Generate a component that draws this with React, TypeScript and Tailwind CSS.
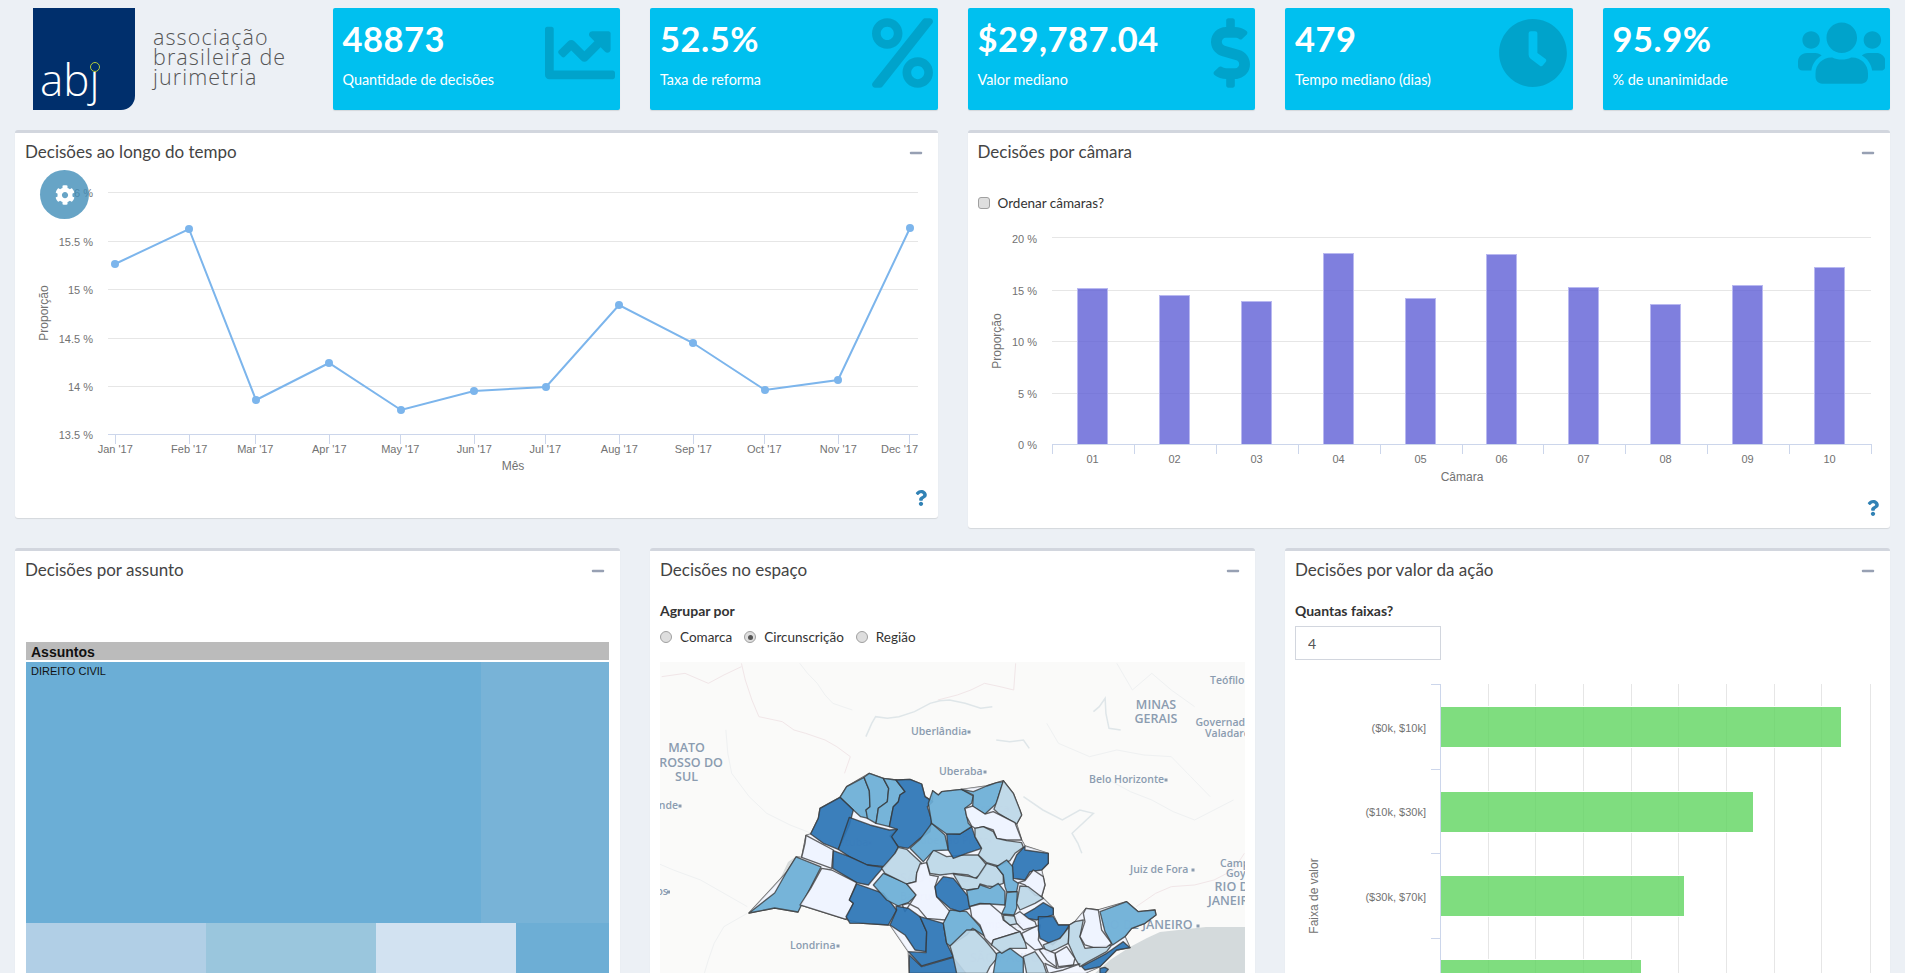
import type { ReactNode } from 'react';
import { FaChartLine, FaClock, FaCog, FaDollarSign, FaMinus, FaPercent, FaQuestion, FaUsers } from 'react-icons/fa';

const stats = [
  { value: '48873', label: 'Quantidade de decisões', Icon: FaChartLine, iconWidth: 'w-[70px]' },
  { value: '52.5%', label: 'Taxa de reforma', Icon: FaPercent, iconWidth: 'w-[61px]' },
  { value: '$29,787.04', label: 'Valor mediano', Icon: FaDollarSign, iconWidth: 'w-[39px]' },
  { value: '479', label: 'Tempo mediano (dias)', Icon: FaClock, iconWidth: 'w-[70px]' },
  { value: '95.9%', label: '% de unanimidade', Icon: FaUsers, iconWidth: 'w-[87.5px]' },
];

const lineData = [
  ["Jan '17", 115.3, 115, 264],
  ["Feb '17", 189.3, 189, 229],
  ["Mar '17", 255.3, 256, 400],
  ["Apr '17", 329.3, 329, 363],
  ["May '17", 400.3, 401, 410],
  ["Jun '17", 474.3, 474, 391],
  ["Jul '17", 545.3, 546, 387],
  ["Aug '17", 619.3, 619, 305],
  ["Sep '17", 693.3, 693, 343],
  ["Oct '17", 764.3, 765, 390],
  ["Nov '17", 838.3, 838, 380],
  ["Dec '17", 909.3, 910, 228],
] as const;

const chamberBars = [
  ['01', 1077.5, 288.5],
  ['02', 1159.5, 295.5],
  ['03', 1241.5, 301.5],
  ['04', 1323.5, 253.5],
  ['05', 1405.5, 298.5],
  ['06', 1486.5, 254.5],
  ['07', 1568.5, 287.5],
  ['08', 1650.5, 304.5],
  ['09', 1732.5, 285.5],
  ['10', 1814.5, 267.5],
] as const;

const AXIS_TEXT = '#727272';
const DARK = '#2b74b5';
const MID = '#6baed6';
const LIGHT = '#bdd7e7';
const PALE = '#eff3ff';

// state outline, goes under the regions so small gaps stay pale
const outline =
  '-123,459 -12,339 18,291 35,292 48,226 62,222 85,175 90,145 150,112 170,80 238,40 280,55 318,60 360,58 395,72 405,110 428,125 428,92 445,105 455,95 515,88 590,78 640,62 670,100 695,165 680,192 695,240 705,258 775,280 775,310 755,330 765,375 755,410 790,445 790,465 805,495 838,495 855,485 888,445 925,450 1010,425 1045,455 1095,450 1098,465 1065,490 1025,505 1005,530 1020,563 980,570 930,620 885,640 358,640 355,575 300,495 220,490 168,478 30,435 24,456 -46,444';

// traced off the reference, coordinates are 3x page px from (790,760)
const regions: [string, string][] = [
  [MID, '150,112 170,80 222,52 238,92 240,140 228,150 235,175 212,170 190,150'],
  [MID, '222,52 238,40 280,55 296,85 292,125 265,145 258,190 232,175 228,150 240,140 238,92'],
  [MID, '280,55 318,60 345,95 330,105 325,125 310,140 298,200 258,190 265,145 292,125 296,85'],
  [DARK, '318,60 360,58 395,72 405,110 428,125 412,140 425,180 420,215 390,235 355,265 325,260 300,228 322,208 298,200 310,140 325,125 330,105 345,95'],
  [DARK, '62,222 85,175 90,145 150,112 190,150 178,195 145,268 100,250'],
  [DARK, '178,172 240,195 298,210 322,208 305,230 325,262 315,280 285,320 232,315 178,290 145,268'],
  [PALE, '48,226 130,270 125,325 35,292 45,250'],
  [DARK, '130,272 178,290 232,315 280,322 260,345 235,375 200,368 128,325'],
  [MID, '-123,459 -46,444 24,456 47,411 93,321 18,291 -12,339 -46,399'],
  [PALE, '95,325 125,330 200,368 178,420 190,430 168,478 30,435 62,385'],
  [DARK, '200,372 280,400 320,450 295,495 220,490 180,490 168,470 190,430 178,420'],
  [MID, '250,375 280,340 350,370 380,405 355,428 325,438 290,420'],
  [LIGHT, '275,325 315,280 325,262 350,268 395,310 380,340 378,365 350,372 285,340'],
  [PALE, '390,312 410,308 420,345 445,350 435,380 440,410 480,455 465,480 410,475 385,445 355,430 337,435 345,455 378,405 350,372 378,365 380,340'],
  [DARK, '318,438 355,445 390,470 410,515 408,575 375,570 345,525 300,495 320,450'],
  [DARK, '390,470 460,490 470,550 490,590 395,618 355,575 408,578 410,515'],
  [DARK, '358,585 395,620 490,592 528,640 358,640'],
  [MID, '480,450 530,455 570,500 587,530 548,505 530,525 480,558 470,550 460,490'],
  [LIGHT, '530,510 555,510 585,540 610,570 625,590 600,620 590,640 500,640 488,585 480,558'],
  [MID, '610,640 620,580 660,565 700,595 700,640'],
  [DARK, '435,380 460,350 490,355 515,385 535,410 540,445 510,455 480,445 440,410'],
  [LIGHT, '410,305 430,270 470,290 520,285 565,285 590,315 570,345 555,355 535,345 490,340 450,345 420,340'],
  [LIGHT, '490,342 540,350 560,355 590,310 620,320 640,345 640,370 610,380 590,378 570,372 565,385 530,390 515,385'],
  [MID, '530,392 565,385 570,375 600,385 625,370 645,395 645,435 600,432 570,430 538,440'],
  [MID, '360,265 390,238 425,190 465,225 475,270 430,272 400,305'],
  [DARK, '470,220 510,222 545,200 555,230 575,265 530,280 490,295 475,270'],
  [MID, '415,130 428,92 445,105 455,95 515,88 550,108 545,130 525,145 535,190 545,200 510,222 470,222 425,190 420,160'],
  [MID, '515,88 550,95 590,78 620,68 640,65 625,110 620,130 585,162 548,140 550,105'],
  [LIGHT, '640,62 670,100 690,150 695,165 680,192 625,160 612,148 625,110'],
  [PALE, '525,145 548,138 585,162 610,155 675,188 695,240 650,240 620,235 610,210 580,200 555,205 545,198 530,170'],
  [LIGHT, '555,205 580,200 610,215 620,235 650,242 695,248 700,262 675,280 660,302 625,318 590,308 565,285 575,265 555,230'],
  [DARK, '705,258 705,270 775,280 775,310 755,330 720,335 705,360 670,355 665,320 680,285'],
  [MID, '620,320 650,300 668,320 670,360 685,370 680,395 650,395 645,380 640,345'],
  [PALE, '685,368 705,362 730,330 760,350 765,375 755,410 735,405 705,375'],
  [MID, '650,398 682,395 680,445 672,465 635,462 645,440'],
  [LIGHT, '690,378 715,380 760,415 735,430 690,450 680,430'],
  [DARK, '700,465 735,445 760,428 790,445 790,465 740,480 710,475'],
  [PALE, '540,440 570,432 600,432 635,462 640,480 680,510 690,515 610,540 605,555 585,535 570,495 545,470'],
  [LIGHT, '640,465 675,468 690,490 660,495 642,480'],
  [PALE, '672,465 690,455 715,475 735,485 740,500 715,505 700,510 680,490'],
  [LIGHT, '610,540 690,515 705,545 710,565 660,565 635,580 605,555'],
  [PALE, '695,520 725,505 750,495 745,540 760,565 735,570 705,545'],
  [DARK, '745,470 790,470 805,495 838,495 820,525 788,555 750,535 745,510'],
  [LIGHT, '760,555 810,535 838,500 835,550 795,570 770,580'],
  [LIGHT, '838,495 855,485 880,480 870,530 885,565 965,555 950,575 895,605 870,620 855,595 835,550'],
  [PALE, '880,460 888,445 925,450 935,510 965,550 950,562 910,562 885,555 870,530 885,485'],
  [MID, '930,455 1010,425 1045,455 1095,450 1098,465 1065,490 1025,505 1005,530 968,555 945,515'],
  [DARK, '875,620 950,580 1000,545 1020,563 980,570 930,620 885,630'],
  [DARK, '930,625 945,622 955,628 945,640 930,640'],
  [PALE, '795,580 830,560 855,595 850,615 805,620'],
  [PALE, '765,610 800,625 870,612 820,630 775,640'],
  [LIGHT, '700,590 735,575 760,610 770,640 710,640'],
  [PALE, '748,570 760,565 795,580 800,622 770,600'],
];

const mapLabels: [string, number, number, 'start' | 'middle' | 'end', number][] = [
  ['Teófilo', 1210, 681, 'start', 10.5],
  ['MINAS', 1156, 706, 'middle', 12.5],
  ['GERAIS', 1156, 720, 'middle', 12.5],
  ['Governador', 1195.5, 723, 'start', 10.5],
  ['Valadares', 1205, 734, 'start', 10.5],
  ['Uberlândia', 911, 732, 'start', 10.5],
  ['Uberaba', 939, 772, 'start', 10.5],
  ['Belo Horizonte', 1089, 780, 'start', 10.5],
  ['MATO', 686.6, 749, 'middle', 12.5],
  ['GROSSO DO', 686.6, 764, 'middle', 12.5],
  ['SUL', 686.6, 778, 'middle', 12.5],
  ['Campo Grande', 678, 806, 'end', 10.5],
  ['Dourados', 668, 892, 'end', 10.5],
  ['Londrina', 790, 946, 'start', 10.5],
  ['Juiz de Fora', 1130, 870, 'start', 10.5],
  ['Campos dos', 1220, 864, 'start', 10.5],
  ['Goytacazes', 1226, 874, 'start', 10.5],
  ['RIO DE', 1214.6, 888, 'start', 12.5],
  ['JANEIRO', 1208, 902, 'start', 12.5],
  ['RIO DE JANEIRO', 1098, 926, 'start', 12.5],
  ['Araçatuba', 816, 843, 'start', 10.5],
  ['Ribeirão Preto', 917, 841, 'start', 10.5],
  ['Franca', 975, 809, 'start', 10.5],
  ['SÃO PAULO', 900, 879, 'start', 12.5],
  ['Bauru', 900, 897, 'start', 10.5],
  ['Campinas', 972, 925, 'start', 10.5],
  ['SÃO PAULO', 970, 959, 'start', 12.5],
];

const mapDots = [
  [969, 732], [985, 772], [1166, 780], [680, 806], [838, 946], [1193, 870], [1198, 926],
  [870, 843], [990, 841], [1008, 809], [932, 897], [1023, 925], [668.5, 892],
];

function Box({ title, children }: { title: string; children: ReactNode }) {
  return (
    <div className="relative rounded-[3px] border-t-[3px] border-[#d2d6de] bg-white shadow-[0_1px_1px_rgba(0,0,0,0.1)]">
      <div className="flex h-[40px] items-center justify-between pl-[10px] pr-[15px]">
        <h3 className="pb-[3px] text-[17px] text-[#444]">{title}</h3>
        <FaMinus size={14} className="text-[#97a0b3]" />
      </div>
      {children}
    </div>
  );
}

function HelpMark() {
  return (
    <div className="flex h-[40px] items-center justify-end pr-[9px] text-[#3182b5]">
      <FaQuestion size={16} />
    </div>
  );
}

function Radio({ label, checked = false }: { label: string; checked?: boolean }) {
  return (
    <div className="flex items-center gap-[8px] text-[13.5px] text-[#333]">
      <div className="flex h-3 w-3 items-center justify-center rounded-full border border-[#a0a0a0] bg-[#dedede]">
        {checked && <div className="h-[5px] w-[5px] rounded-full bg-[#555]" />}
      </div>
      <span>{label}</span>
    </div>
  );
}

function LineChart() {
  const points = lineData.map((d) => `${d[2]},${d[3]}`).join(' ');
  const grid: [number, string][] = [
    [192.5, '16 %'],
    [241.5, '15.5 %'],
    [289.5, '15 %'],
    [338.5, '14.5 %'],
    [386.5, '14 %'],
    [434.5, '13.5 %'],
  ];
  return (
    <svg viewBox="15 173 922 305" className="block h-[305px] w-[922px] font-['Liberation_Sans',sans-serif] text-[11px]">
      {grid.map(([y, label], i) => (
        <g key={label}>
          <line x1="108" x2="918" y1={y} y2={y} stroke={i === 5 ? '#ccd6eb' : '#e6e6e6'} shapeRendering="crispEdges" />
          <text x="93" y={y + 2} textAnchor="end" dominantBaseline="middle" fill={AXIS_TEXT}>{label}</text>
        </g>
      ))}
      {lineData.map((d, i) => (
        <g key={d[0]}>
          <line x1={d[1]} x2={d[1]} y1="434" y2="444" stroke="#ccd6eb" shapeRendering="crispEdges" />
          <text x={i === 11 ? 918 : d[1]} y="450" textAnchor={i === 11 ? 'end' : 'middle'} dominantBaseline="middle" fill={AXIS_TEXT}>{d[0]}</text>
        </g>
      ))}
      <text x="513" y="467" textAnchor="middle" dominantBaseline="middle" fill={AXIS_TEXT} className="text-[12px]">Mês</text>
      <text x="45" y="313" textAnchor="middle" dominantBaseline="middle" fill={AXIS_TEXT} transform="rotate(-90 45 313)" className="text-[12px]">Proporção</text>
      <polyline points={points} fill="none" stroke="#7cb5ec" strokeWidth="2" />
      {lineData.map((d) => (
        <circle key={d[0]} cx={d[2]} cy={d[3]} r="4" fill="#7cb5ec" />
      ))}
    </svg>
  );
}

function ChamberChart() {
  const grid: [number, string, number][] = [
    [237.5, '20 %', 240.5],
    [290.5, '15 %', 292.5],
    [341.5, '10 %', 343.5],
    [393.5, '5 %', 395.5],
  ];
  const ticks = [1052, 1134, 1216, 1298, 1380, 1462, 1543, 1625, 1707, 1789, 1871];
  return (
    <svg viewBox="968 213 922 275" className="block h-[275px] w-[922px] font-['Liberation_Sans',sans-serif] text-[11px]">
      {grid.map(([y, label, ty]) => (
        <g key={label}>
          <line x1="1052" x2="1871" y1={y} y2={y} stroke="#e6e6e6" shapeRendering="crispEdges" />
          <text x="1037" y={ty} textAnchor="end" dominantBaseline="middle" fill={AXIS_TEXT}>{label}</text>
        </g>
      ))}
      <text x="1037" y="446" textAnchor="end" dominantBaseline="middle" fill={AXIS_TEXT}>0 %</text>
      {chamberBars.map(([name, x, y]) => (
        <rect key={name} x={x} y={y} width="30" height={444.5 - y} fill="#5f5fd6" fillOpacity="0.8" stroke="#b9b9f0" shapeRendering="crispEdges" />
      ))}
      <line x1="1052" x2="1871" y1="444.5" y2="444.5" stroke="#ccd6eb" shapeRendering="crispEdges" />
      {ticks.map((x) => (
        <line key={x} x1={x} x2={x} y1="444" y2="454" stroke="#ccd6eb" shapeRendering="crispEdges" />
      ))}
      {chamberBars.map(([name, x]) => (
        <text key={name} x={x + 15} y="460" textAnchor="middle" dominantBaseline="middle" fill={AXIS_TEXT}>{name}</text>
      ))}
      <text x="1462" y="478" textAnchor="middle" dominantBaseline="middle" fill={AXIS_TEXT} className="text-[12px]">Câmara</text>
      <text x="998" y="341" textAnchor="middle" dominantBaseline="middle" fill={AXIS_TEXT} transform="rotate(-90 998 341)" className="text-[12px]">Proporção</text>
    </svg>
  );
}

function SpMap() {
  return (
    <svg viewBox="660 662 585 330" className="block h-[330px] w-[585px] bg-[#fafaf9]">
      <g fill="none" stroke="#f1e6e8" strokeWidth="1" transform="translate(650 640) scale(0.389 0.3333)">
        <polyline vectorEffect="non-scaling-stroke" points="235,70 245,120 262,180 280,230 340,245 370,270 400,280 450,300 480,320 515,350 500,400" />
        <polyline vectorEffect="non-scaling-stroke" points="940,70 935,150 900,140 860,130 825,150 790,165 740,180" />
        <polyline vectorEffect="non-scaling-stroke" points="30,110 90,100 150,130 190,105 235,80" />
        <polyline vectorEffect="non-scaling-stroke" points="1250,800 1300,760 1340,740 1400,735 1450,720 1500,690 1528,640" />
      </g>
      <g fill="none" stroke="#eff1f2" strokeWidth="1" transform="translate(650 640) scale(0.389 0.3333)">
        <polyline vectorEffect="non-scaling-stroke" points="385,70 405,100 430,130 450,165 470,190 520,210" />
        <polyline vectorEffect="non-scaling-stroke" points="195,270 200,340 210,400 255,470 300,520 360,555 415,580" />
        <polyline vectorEffect="non-scaling-stroke" points="0,660 60,690 130,720 190,760 250,800" />
        <polyline vectorEffect="non-scaling-stroke" points="250,820 190,860 165,910 150,960 140,999" />
        <polyline vectorEffect="non-scaling-stroke" points="1200,70 1220,110 1240,150 1265,125 1290,100 1340,150 1400,200" />
        <polyline vectorEffect="non-scaling-stroke" points="1020,250 1050,310 1090,330 1130,350 1200,330 1270,345 1340,350 1390,410 1440,470" />
        <polyline vectorEffect="non-scaling-stroke" points="1180,420 1235,455 1290,480 1345,515 1400,540 1450,510 1500,480" />
      </g>
      <g fill="none" stroke="#dfe6e9" strokeWidth="1.5" transform="translate(650 640) scale(0.389 0.3333)">
        <polyline vectorEffect="non-scaling-stroke" points="555,290 570,250 580,230 610,235 640,230 680,215 720,190 745,182 770,180 810,190 850,205 880,200" />
        <polyline vectorEffect="non-scaling-stroke" points="1140,215 1155,200 1170,175 1172,220 1180,265 1210,270" />
        <polyline vectorEffect="non-scaling-stroke" points="890,300 925,305 960,300 975,325" />
        <polyline vectorEffect="non-scaling-stroke" points="960,470 1010,510 1060,540 1105,510 1140,520 1085,580 1100,610 1110,640" />
      </g>
      <polygon points="1245,927 1206,927 1160,932 1147,938 1130,947 1110,960 1093,975 1245,992" fill="#d4dadc" />
      <polygon points="795,857 785,875 772,895 760,905 775,890 788,862" fill="#d8dcdc" />
      <g fill="#8b9cb0" className="font-['Open_Sans',sans-serif] font-semibold">
        {mapLabels.map(([text, x, y, anchor, size], i) => (
          <text key={i} x={x} y={y} textAnchor={anchor} dominantBaseline="middle" fontSize={size}>{text}</text>
        ))}
        {mapDots.map(([x, y]) => (
          <rect key={`${x}-${y}`} x={x - 1.5} y={y - 1.5} width="3" height="3" />
        ))}
      </g>
      <g transform="translate(790 760) scale(0.3333)">
        <polygon points={outline} fill="#fff" stroke="#444" strokeOpacity="0.8" strokeWidth="4" strokeLinejoin="round" fillOpacity="0.45" />
        <polygon points={outline} fill={PALE} fillOpacity="0.7" />
        {regions.map(([color, pts], i) => (
          <polygon key={i} points={pts} fill={color} fillOpacity="0.92" stroke="#333" strokeOpacity="0.75" strokeWidth="4" strokeLinejoin="round" />
        ))}
      </g>
    </svg>
  );
}

function ValueChart() {
  const gridX = [1488.5, 1535.5, 1583.5, 1631.5, 1678.5, 1726.5, 1774.5, 1821.5, 1870.5];
  const bars = [
    [707, 1841, '($0k, $10k]', 729],
    [792, 1753, '($10k, $30k]', 813],
    [876, 1684, '($30k, $70k]', 898],
    [960, 1641, '($70k, $200k]', 982],
  ] as const;
  return (
    <svg viewBox="1285 684 605 330" className="mt-[24px] block h-[330px] w-[605px] font-['Liberation_Sans',sans-serif] text-[11px]">
      {gridX.map((x) => (
        <line key={x} x1={x} x2={x} y1="684" y2="1014" stroke="#e6e6e6" shapeRendering="crispEdges" />
      ))}
      {bars.map(([y, right, label, ty]) => (
        <g key={label}>
          <rect x="1440.5" y={y - 0.5} width={right - 1440.5} height="41" fill="#5fd55f" fillOpacity="0.8" stroke="#fff" shapeRendering="crispEdges" />
          <text x="1426" y={ty} textAnchor="end" dominantBaseline="middle" fill={AXIS_TEXT}>{label}</text>
        </g>
      ))}
      <line x1="1440.5" x2="1440.5" y1="684" y2="1014" stroke="#ccd6eb" shapeRendering="crispEdges" />
      {[684.5, 769.5, 853.5, 938.5].map((y) => (
        <line key={y} x1="1431" x2="1440" y1={y} y2={y} stroke="#ccd6eb" shapeRendering="crispEdges" />
      ))}
      <text x="1315" y="896" textAnchor="middle" dominantBaseline="middle" fill={AXIS_TEXT} transform="rotate(-90 1315 896)" className="text-[12px]">Faixa de valor</text>
    </svg>
  );
}

export default function App() {
  return (
    <div className="h-[973px] overflow-hidden bg-[#ecf0f5] font-['Lato',sans-serif] text-[#333]">
      <div className="grid grid-cols-6 gap-x-[30px] px-[15px] pt-2">
        <div className="flex pl-[18px]">
          <div className="relative h-[102px] w-[102px] shrink-0 rounded-br-[14px] bg-[#002f6c]">
            <span className="absolute left-[7px] top-[47px] font-['Open_Sans',sans-serif] text-[44px] font-light leading-[48px] text-white">abj</span>
            <span className="absolute left-[57px] top-[54px] h-[10px] w-[10px] rounded-full border border-[#b4cc3c] bg-[#002f6c]" />
          </div>
          <div className="whitespace-nowrap pl-[18px] pt-[19px] font-['Open_Sans',sans-serif] text-[21.5px] font-light leading-[20px] tracking-[1.1px] text-[#555]">
            associação<br />brasileira de<br />jurimetria
          </div>
        </div>
        {stats.map(({ value, label, Icon, iconWidth }) => (
          <div key={label} className="relative h-[102px] overflow-hidden rounded-[2px] bg-[#00c0ef] pl-[10px] pt-[10px] text-white shadow-[0_1px_1px_rgba(0,0,0,0.1)]">
            <div className="text-[34.5px] font-bold leading-[42px] tracking-[0.5px]">{value}</div>
            <div className="mt-[10px] text-[14.4px] leading-[20px]">{label}</div>
            <Icon className={`absolute right-[5px] top-[10px] h-[70px] text-black/15 ${iconWidth}`} />
          </div>
        ))}
      </div>

      <div className="mt-5 grid grid-cols-2 items-start gap-x-[30px] px-[15px]">
        <Box title="Decisões ao longo do tempo">
          <LineChart />
          <HelpMark />
          <button className="absolute left-[25px] top-[37px] flex h-[49px] w-[49px] items-center justify-center rounded-full bg-[#418db8]/80 text-white">
            <FaCog size={20} />
          </button>
        </Box>
        <Box title="Decisões por câmara">
          <div className="flex h-[40px] items-end pl-[10px]">
            <div className="flex h-[20px] items-center gap-[8px]">
              <div className="h-3 w-3 rounded-[3px] border border-[#a0a0a0] bg-[#dedede]" />
              <span className="text-[13.5px]">Ordenar câmaras?</span>
            </div>
          </div>
          <ChamberChart />
          <HelpMark />
        </Box>
      </div>

      <div className="mt-5 grid grid-cols-3 items-start gap-x-[30px] px-[15px]">
        <Box title="Decisões por assunto">
          <div className="px-[11px] pt-[51px]">
            <div className="flex h-[18px] items-center bg-[#bbbbbb] pl-[5px] pt-[2px] font-['Liberation_Sans',sans-serif] text-[14px] font-bold text-[#111]">Assuntos</div>
            <div className="mt-[2px] flex h-[261px]">
              <div className="w-[455px] bg-[#6baed6] pl-[5px] pt-[3px] font-['Liberation_Sans',sans-serif] text-[11px] leading-[13px] text-[#111]">DIREITO CIVIL</div>
              <div className="flex-1 bg-[#78b3d7]" />
            </div>
            <div className="flex h-[100px]">
              <div className="w-[180px] bg-[#b1cfe6]" />
              <div className="w-[170px] bg-[#9ac6dd]" />
              <div className="w-[140px] bg-[#d2e2f1]" />
              <div className="flex-1 bg-[#6daed5]" />
            </div>
          </div>
        </Box>
        <Box title="Decisões no espaço">
          <div className="px-[10px] pt-[10px]">
            <div className="text-[14px] font-bold leading-[20px]">Agrupar por</div>
            <div className="mt-[6px] flex h-[20px] items-center gap-[12px]">
              <Radio label="Comarca" />
              <Radio label="Circunscrição" checked />
              <Radio label="Região" />
            </div>
            <div className="mt-[15px]">
              <SpMap />
            </div>
          </div>
        </Box>
        <Box title="Decisões por valor da ação">
          <div className="pt-[10px]">
            <div className="pl-[10px] text-[14px] font-bold leading-[20px]">Quantas faixas?</div>
            <div className="pl-[10px]">
              <input defaultValue="4" className="mt-[5px] block h-[34px] w-[146px] border border-[#d2d6de] px-3 text-[14px] text-[#555]" />
            </div>
            <ValueChart />
          </div>
        </Box>
      </div>
    </div>
  );
}
